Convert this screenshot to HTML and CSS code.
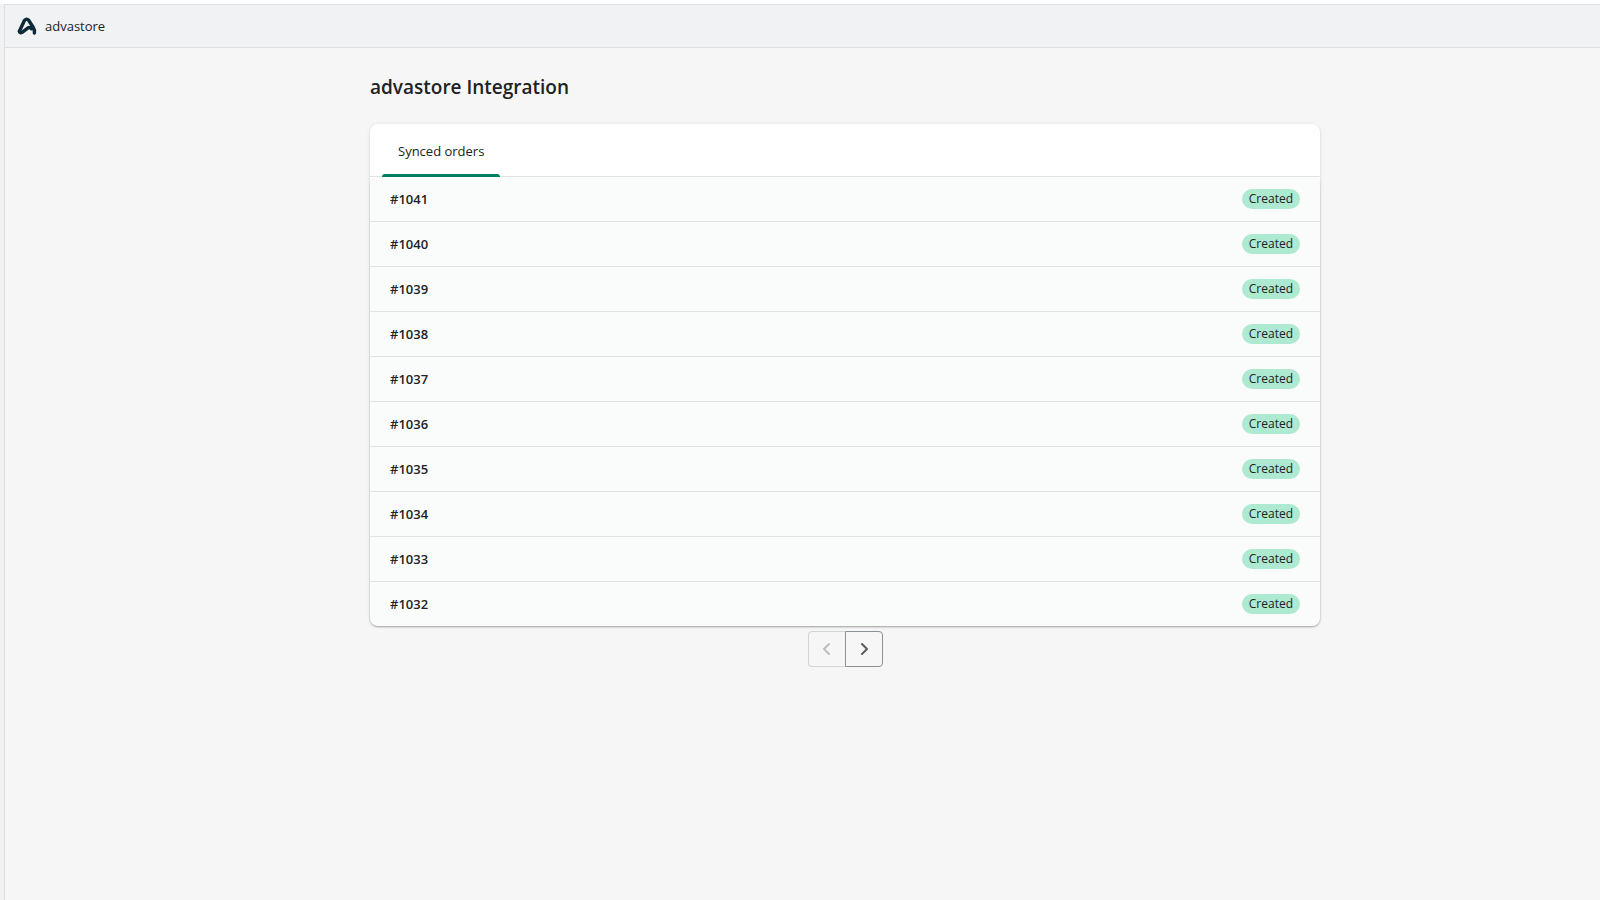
FILE: index.html
```html
<!DOCTYPE html>
<html lang="en">
<head>
<meta charset="utf-8">
<title>advastore Integration</title>
<link rel="stylesheet" href="styles.css">
</head>
<body>
<div class="frame">
  <header class="topbar">
    <svg class="logo" viewBox="0 0 20 20" aria-hidden="true">
      <path d="M2.4 15.2 L7.4 4.6 Q9.4 1.8 11.6 4.2 L16.2 11.2 Q18 14 17.4 17" fill="none" stroke="#0e2a38" stroke-width="3.4" stroke-linejoin="round" stroke-linecap="round"/>
      <path d="M2.4 15.2 Q2.6 17.8 5.4 16.2 L11.4 11.6 Q13.6 11 14.6 12.8" fill="none" stroke="#0e2a38" stroke-width="3.4" stroke-linejoin="round" stroke-linecap="round"/>
    </svg>
    <span class="app-name">advastore</span>
  </header>
  <main class="main">
    <div class="page">
      <h1 class="title">advastore Integration</h1>
      <section class="card">
        <div class="tabs" role="tablist">
          <button class="tab" type="button" role="tab" aria-selected="true">Synced orders</button>
        </div>
        <ul class="orders">
          <li class="order"><span class="order-id">#1041</span><span class="badge">Created</span></li>
          <li class="order"><span class="order-id">#1040</span><span class="badge">Created</span></li>
          <li class="order"><span class="order-id">#1039</span><span class="badge">Created</span></li>
          <li class="order"><span class="order-id">#1038</span><span class="badge">Created</span></li>
          <li class="order"><span class="order-id">#1037</span><span class="badge">Created</span></li>
          <li class="order"><span class="order-id">#1036</span><span class="badge">Created</span></li>
          <li class="order"><span class="order-id">#1035</span><span class="badge">Created</span></li>
          <li class="order"><span class="order-id">#1034</span><span class="badge">Created</span></li>
          <li class="order"><span class="order-id">#1033</span><span class="badge">Created</span></li>
          <li class="order"><span class="order-id">#1032</span><span class="badge">Created</span></li>
        </ul>
      </section>
      <nav class="pagination" aria-label="Pagination">
        <button class="pager prev" type="button" aria-label="Previous" disabled>
          <svg class="chevron" viewBox="0 0 20 20"><path d="M12 5 7 10l5 5"/></svg>
        </button>
        <button class="pager next" type="button" aria-label="Next">
          <svg class="chevron" viewBox="0 0 20 20"><path d="m8 5 5 5-5 5"/></svg>
        </button>
      </nav>
    </div>
  </main>
</div>
</body>
</html>
```
FILE: styles.css
```css
* {
  box-sizing: border-box;
}

body {
  margin: 0;
  padding: 4px 0 0 4px;
  min-height: 100vh;
  display: flex;
  background: linear-gradient(#fff 4px, #f1f2f4 4px);
  color: #202223;
  font-family: "Segoe UI", "Open Sans", "Noto Sans", sans-serif;
  font-size: 13px;
  line-height: 20px;
}

.frame {
  flex: 1;
  display: flex;
  flex-direction: column;
  border-top: 1px solid #dfe1e4;
  border-left: 1px solid #dcdfe3;
  background: #f6f6f7;
}

.topbar {
  display: flex;
  align-items: center;
  gap: 8px;
  height: 43px;
  padding: 0 12px;
  background: #f1f2f4;
  border-bottom: 1px solid #dcdfe3;
}

.logo {
  width: 20px;
  height: 20px;
}

.main {
  flex: 1;
  padding-left: 85px;
  background: #f6f6f6;
}

.page {
  max-width: 998px;
  margin: 0 auto;
  padding: 24px;
}

.title {
  margin: 0 0 22px;
  font-size: 19px;
  font-weight: 600;
  line-height: 30px;
}

.card {
  border-radius: 8px;
  background: #fff;
  box-shadow: 0 0 5px rgba(23, 24, 24, 0.06), 0 1px 2px rgba(0, 0, 0, 0.15);
}

.tabs {
  display: flex;
  padding: 0 12px;
  border-bottom: 1px solid #dfe1e2;
}

.tab {
  position: relative;
  height: 53px;
  margin-bottom: -1px;
  padding: 0 16px;
  border: 0;
  background: transparent;
  color: inherit;
  font: inherit;
}

.tab::after {
  content: "";
  position: absolute;
  left: 0;
  right: 0;
  bottom: 0;
  height: 3px;
  border-radius: 3px 3px 0 0;
  background: #008060;
}

.orders {
  margin: 0;
  padding: 0;
  list-style: none;
  border-radius: 8px;
  background: #fafcfc;
  box-shadow: 0 1px 2px rgba(0, 0, 0, 0.2);
  clip-path: inset(0 -5px -5px -5px);
}

.order {
  display: flex;
  align-items: center;
  justify-content: space-between;
  height: 45px;
  padding: 0 20px;
  border-top: 1px solid #dfe2e3;
}

.order:first-child {
  height: 44px;
  border-top: 0;
}

.order-id {
  font-weight: 600;
}

.badge {
  padding: 0 7px;
  border-radius: 10px;
  background: #aee9d1;
  font-size: 12px;
}

.pagination {
  display: flex;
  justify-content: center;
  margin-top: 5px;
}

.pager {
  display: grid;
  place-items: center;
  width: 38px;
  height: 36px;
  padding: 0;
  border: 1px solid #8c9196;
  background: transparent;
  color: #5c5f62;
}

.prev {
  width: 37px;
  border-color: #d2d5d8;
  border-right: 0;
  border-radius: 4px 0 0 4px;
  color: #babec3;
}

.next {
  border-radius: 0 4px 4px 0;
}

.chevron {
  width: 20px;
  height: 20px;
  fill: none;
  stroke: currentColor;
  stroke-width: 2;
  stroke-linecap: round;
  stroke-linejoin: round;
}
```
